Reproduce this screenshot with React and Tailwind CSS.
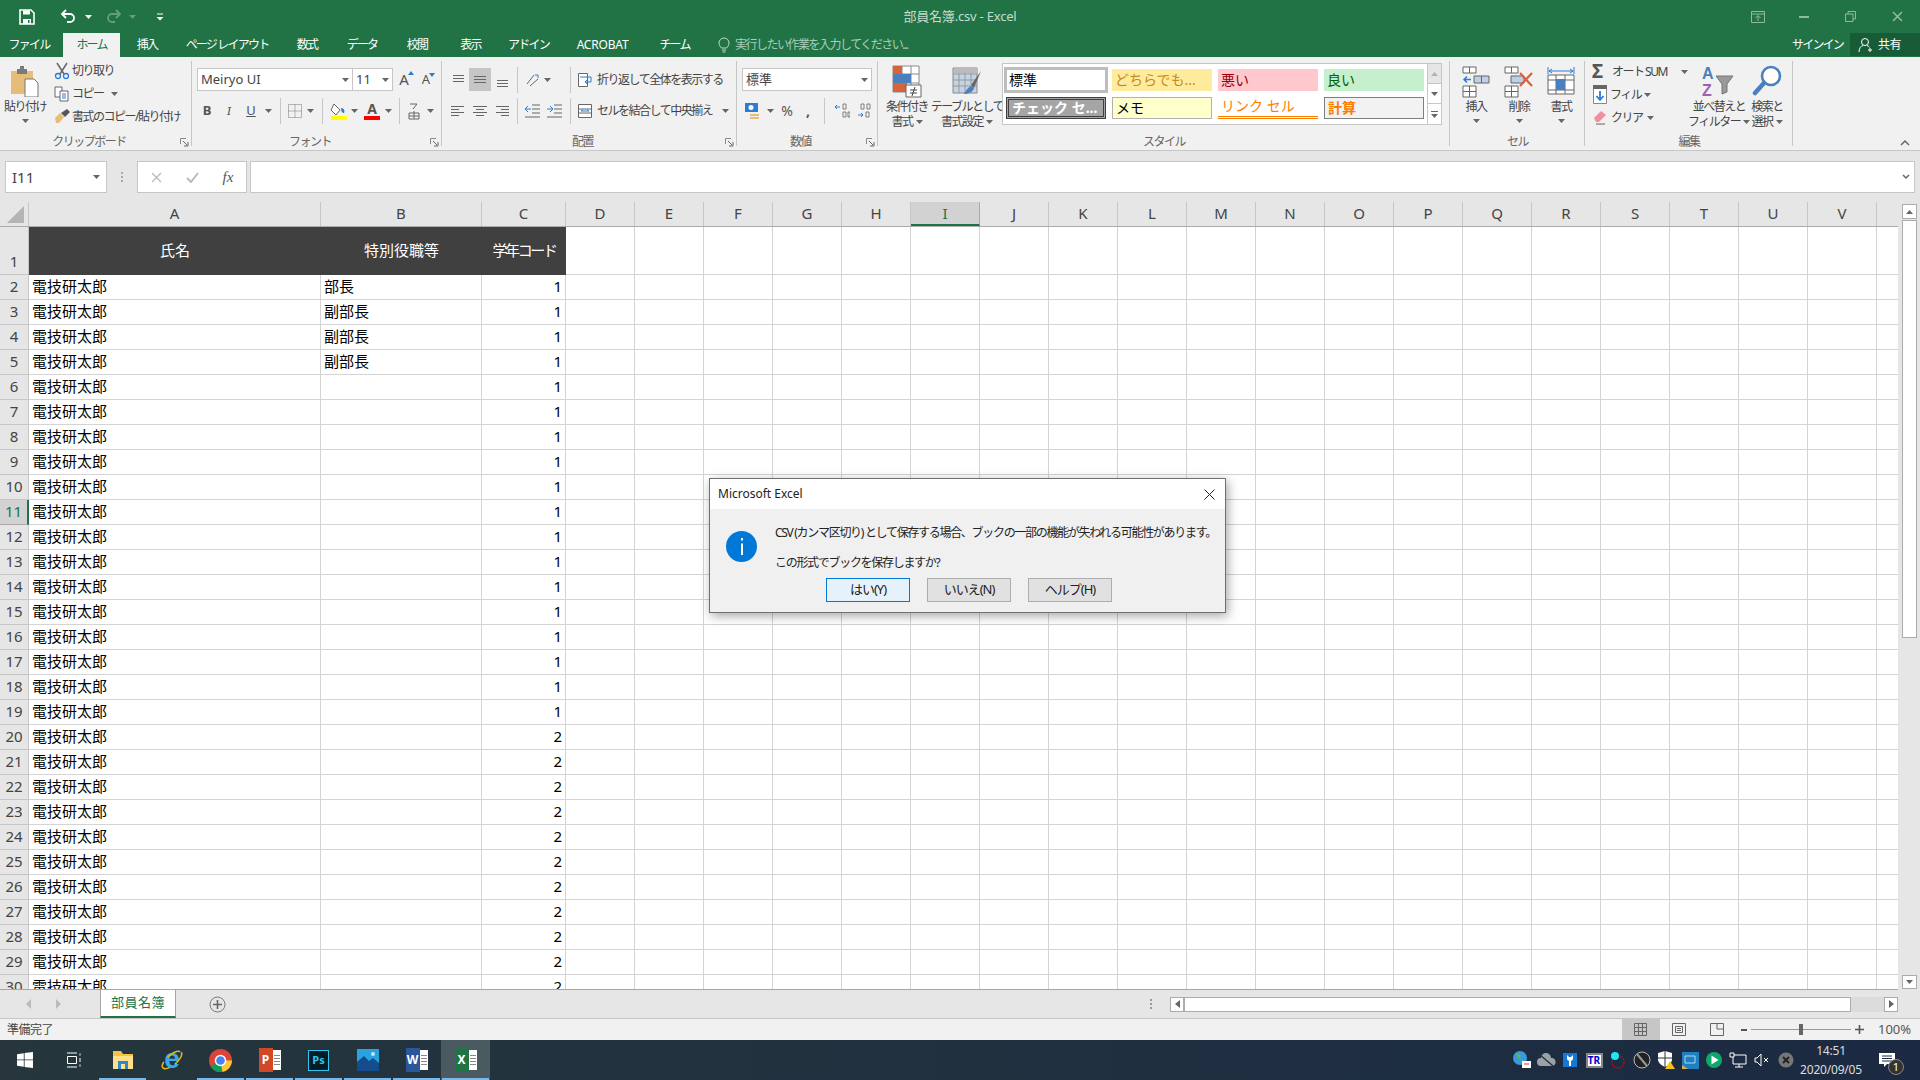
import React from 'react';

const COLS = ['D','E','F','G','H','I','J','K','L','M','N','O','P','Q','R','S','T','U','V','W'];

function Caret({ color = '#666' }) {
  return (
    <svg width="7" height="4" viewBox="0 0 7 4" className="flex-none">
      <path d="M0 0h7L3.5 4z" fill={color} />
    </svg>
  );
}

function Slot({ w, children, className = '' }) {
  return <div style={{ width: w }} className={`flex-none flex items-center justify-center ${className}`}>{children}</div>;
}

function Sep({ w }) {
  return (
    <Slot w={w} className="h-full">
      <div className="w-px h-[26px] bg-[#c6c6c6]" />
    </Slot>
  );
}

function Group({ w, label, launcher, children }) {
  return (
    <div style={{ width: w }} className="flex-none flex flex-col relative">
      <div className="absolute right-0 top-[4px] bottom-[4px] w-px bg-[#c6c6c6]" />
      <div className="h-[68px] mt-[8px] flex-none">{children}</div>
      <div className={`flex items-center justify-center h-[14px] mt-[2px] text-[#666] relative ${launcher ? 'pr-[14px]' : ''}`}>
        <span>{label}</span>
        {launcher && (
          <svg width="9" height="9" viewBox="0 0 9 9" className="absolute right-[3px] top-[3px]">
            <path d="M0.5 6V0.5H6" fill="none" stroke="#888" />
            <path d="M3 3l4 4M8 4v4H4" fill="none" stroke="#666" />
          </svg>
        )}
      </div>
    </div>
  );
}

function Lines({ x = 0, rows, stroke = '#666' }) {
  return rows.map((r, i) => <path key={i} d={`M${r[0] + x} ${r[2]}H${r[1] + x}`} stroke={stroke} fill="none" />);
}

function AlignIcon({ rows }) {
  return <svg width="16" height="16" viewBox="0 0 16 16"><Lines rows={rows} /></svg>;
}

function LargeBtn({ w, icon, l1, l2, caretInline }) {
  return (
    <Slot w={w} className="flex-col !justify-start">
      <div className="h-[33px] flex items-center justify-center">{icon}</div>
      <div className="leading-[15px] text-center text-[#444] mt-[1px] whitespace-nowrap">{l1}</div>
      {l2 ? (
        <div className="leading-[15px] text-center text-[#444] flex items-center gap-[3px] whitespace-nowrap">{l2}{caretInline && <Caret />}</div>
      ) : (
        <div className="h-[14px] flex items-center"><Caret /></div>
      )}
    </Slot>
  );
}

function QuickBar() {
  return (
    <div className="h-[33px] flex-none grid grid-cols-3 items-center text-white">
      <div className="flex items-center">
        <Slot w={53}>
          <svg width="16" height="16" viewBox="0 0 16 16">
            <path d="M1 1h11l3 3v11H1z" fill="none" stroke="#fff" strokeWidth="1.6" />
            <path d="M4 1.5h7v4H4zM4 10h8v5H4z" fill="#fff" />
            <path d="M9 11h1.5v3H9z" fill="#217346" />
          </svg>
        </Slot>
        <Slot w={30}>
          <svg width="16" height="16" viewBox="0 0 16 16">
            <path d="M3 5h7a4 4 0 0 1 0 8H7" fill="none" stroke="#fff" strokeWidth="1.8" />
            <path d="M6 1L2 5l4 4" fill="none" stroke="#fff" strokeWidth="1.8" />
          </svg>
        </Slot>
        <Slot w={10}><Caret color="#fff" /></Slot>
        <Slot w={7} />
        <Slot w={28}>
          <svg width="16" height="16" viewBox="0 0 16 16" className="opacity-30">
            <path d="M13 5H6a4 4 0 0 0 0 8h3" fill="none" stroke="#fff" strokeWidth="1.8" />
            <path d="M10 1l4 4-4 4" fill="none" stroke="#fff" strokeWidth="1.8" />
          </svg>
        </Slot>
        <Slot w={8} className="opacity-30"><Caret color="#fff" /></Slot>
        <Slot w={14} />
        <Slot w={20}>
          <svg width="8" height="8" viewBox="0 0 8 8"><path d="M1 1h6" stroke="#fff" /><path d="M0.5 4h7L4 7.5z" fill="#fff" /></svg>
        </Slot>
      </div>
      <div className="text-center text-[13px] text-[#c3dccd] tracking-[-0.2px]">部員名簿.csv - Excel</div>
      <div className="flex justify-end items-center opacity-50">
        <Slot w={46}>
          <svg width="14" height="12" viewBox="0 0 14 12"><path d="M0.5 0.5h13v11H0.5zM0.5 3h13" fill="none" stroke="#fff" /><path d="M7 10V5M4.5 7L7 4.5 9.5 7" fill="none" stroke="#fff" /></svg>
        </Slot>
        <Slot w={46}><div className="w-[10px] h-[2px] bg-white" /></Slot>
        <Slot w={47}>
          <svg width="11" height="11" viewBox="0 0 11 11"><path d="M0.5 3h7.5v7.5H0.5zM3 3V0.5h7.5V8H8" fill="none" stroke="#fff" /></svg>
        </Slot>
        <Slot w={46}>
          <svg width="11" height="11" viewBox="0 0 11 11"><path d="M1 1l9 9M10 1l-9 9" stroke="#fff" strokeWidth="1.6" /></svg>
        </Slot>
      </div>
    </div>
  );
}

function TabBar() {
  const tabs = [['ファイル', 58], ['ホーム', 62, true], ['挿入', 54], ['ページ レイアウト', 106], ['数式', 54], ['データ', 56], ['校閲', 54], ['表示', 53], ['アドイン', 63], ['ACROBAT', 85], ['チーム', 59]];
  return (
    <div className="h-[24px] flex-none flex items-stretch text-white text-[12px] tracking-[-1.8px]">
      {tabs.map(([t, w, active]) => (
        <Slot key={t} w={w} className={active ? 'bg-[#f1f1f1] text-[#217346] ml-[5px] !w-[57px] mr-0' : ''}>
          <span className={t === 'ACROBAT' ? 'tracking-[-0.2px]' : ''}>{t}</span>
        </Slot>
      ))}
      <div className="flex items-center ml-[14px] text-[#a9cdb8] gap-[5px] tracking-[-1.5px]">
        <svg width="12" height="16" viewBox="0 0 12 16"><path d="M3.5 11C2 9.5 1 8 1 6a5 5 0 0 1 10 0c0 2-1 3.500-2.500 5zM4 13h4M4.500 15h3" fill="none" stroke="#c3dccd" /></svg>
        <span>実行したい作業を入力してください...</span>
      </div>
      <div className="flex-1" />
      <div className="flex items-center w-[55px] justify-center mr-[5px]">サインイン</div>
      <div className="w-[70px] h-[23px] bg-[#185c37] flex items-center gap-[4px] pl-[8px] tracking-[-0.5px]">
        <svg width="16" height="16" viewBox="0 0 16 16"><circle cx="7" cy="5" r="3.500" fill="none" stroke="#fff" /><path d="M1 15c0-4 2-6 4-6.500M9 8.500c1 .3 2 1 2.500 2M12 11v4M10 13h4" fill="none" stroke="#fff" /></svg>
        <span>共有</span>
      </div>
    </div>
  );
}

function ClipboardGroup() {
  return (
    <div className="flex">
      <LargeBtn
        w={50}
        icon={
          <svg width="30" height="31" viewBox="0 0 30 31">
            <path d="M1 5h22v23H1z" fill="#e6bd78" />
            <path d="M7 3h10v5H7z" fill="#7a7a7a" /><path d="M10 0h4v4h-4z" fill="#7a7a7a" />
            <path d="M15 13h9l4 4v14H15z" fill="#fff" stroke="#777" />
          </svg>
        }
        l1="貼り付け"
      />
      <div className="flex flex-col h-[68px] mt-[-5px]">
        <div className="h-[23px] flex items-center gap-[2px] pl-[4px]">
          <svg width="16" height="18" viewBox="0 0 16 18"><path d="M3 1l7 11M13 1L6 12" stroke="#666" strokeWidth="1.5" /><circle cx="4" cy="14" r="2.500" fill="none" stroke="#2b7cd3" strokeWidth="1.3" /><circle cx="12" cy="14" r="2.500" fill="none" stroke="#2b7cd3" strokeWidth="1.3" /></svg>
          <span className="text-[#444]">切り取り</span>
        </div>
        <div className="h-[23px] flex items-center gap-[3px] pl-[4px]">
          <svg width="15" height="16" viewBox="0 0 15 16"><path d="M1 1h7v10H1z" fill="#fff" stroke="#666" /><path d="M6 5h8v10H6z" fill="#fff" stroke="#666" /><path d="M8 8h4M8 10h4M8 12h4" stroke="#2b7cd3" /></svg>
          <span className="text-[#444] w-[36px]">コピー</span>
          <Caret />
        </div>
        <div className="h-[23px] flex items-center gap-[2px] pl-[4px]">
          <svg width="16" height="15" viewBox="0 0 16 15"><path d="M1 9l5-5 4 4-5 6H2z" fill="#e6bd78" /><path d="M7 4l6-4 3 3-5 5z" fill="#555" /></svg>
          <span className="text-[#444]">書式のコピー/貼り付け</span>
        </div>
      </div>
    </div>
  );
}

function FontGroup() {
  return (
    <div className="flex flex-col">
      <div className="flex items-center h-[23px] mt-[3px] pl-[5px]">
        <div className="w-[156px] h-[23px] bg-white border border-[#c6c6c6] flex items-center justify-between px-[3px] tracking-normal text-[#444]">
          <span className="text-[13px]">Meiryo UI</span><Caret />
        </div>
        <div className="w-[40px] h-[23px] bg-white border border-[#c6c6c6] border-l-0 flex items-center justify-between px-[3px] tracking-normal text-[#444]">
          <span className="text-[13px]">11</span><Caret />
        </div>
        <Slot w={22}><span className="text-[15px] text-[#555] tracking-normal relative">A<i className="absolute top-[3px] right-[-5px] w-0 h-0 border-x-[3px] border-x-transparent border-b-[4px] border-b-[#2b7cd3]" /></span></Slot>
        <Slot w={22}><span className="text-[13px] text-[#555] tracking-normal relative">A<i className="absolute top-[3px] right-[-5px] w-0 h-0 border-x-[3px] border-x-transparent border-t-[4px] border-t-[#2b7cd3]" /></span></Slot>
      </div>
      <div className="flex items-center h-[23px] mt-[8px] pl-[4px] tracking-normal text-[#555]">
        <Slot w={22}><b className="text-[13px]">B</b></Slot>
        <Slot w={22}><i className="text-[13px] font-serif">I</i></Slot>
        <Slot w={22}><u className="text-[13px]">U</u></Slot>
        <Slot w={12}><Caret /></Slot>
        <Sep w={12} />
        <Slot w={18}>
          <svg width="14" height="14" viewBox="0 0 14 14"><path d="M.5.500h13v13H.500zM7 .500v13M.500 7h13" fill="none" stroke="#777" strokeDasharray="1 1" /></svg>
        </Slot>
        <Slot w={12}><Caret /></Slot>
        <Sep w={12} />
        <Slot w={20}>
          <svg width="17" height="18" viewBox="0 0 17 18"><path d="M4 2l6 6-4 5-5-5z" fill="#fff" stroke="#666" /><path d="M11 6c3 0 4 3 3 5-2 0-3-2-3-5z" fill="#2b7cd3" /><path d="M1 14h16v4H1z" fill="#ff0" /></svg>
        </Slot>
        <Slot w={12}><Caret /></Slot>
        <Slot w={24}>
          <div className="flex flex-col items-center w-[16px]"><span className="text-[14px] leading-[14px] font-bold text-[#555]">A</span><div className="w-full h-[4px] bg-[#f00]" /></div>
        </Slot>
        <Slot w={8}><Caret /></Slot>
        <Sep w={14} />
        <Slot w={16}>
          <svg width="12" height="18" viewBox="0 0 12 18"><path d="M2 2h7L5 7M1 11h10v6H1zM6 9v8M1 14h10" fill="none" stroke="#666" /></svg>
        </Slot>
        <Slot w={16}><Caret /></Slot>
      </div>
    </div>
  );
}

function AlignGroup() {
  const t = [[3, 14, 3.5], [3, 14, 6.5], [3, 14, 9.5]];
  const m = [[2, 14, 4.5], [2, 14, 7.5], [2, 14, 10.5]];
  const b = [[3, 14, 8.5], [3, 14, 11.5], [3, 14, 14.5]];
  const L = [[1, 14, 3.5], [1, 9, 6.5], [1, 14, 9.5], [1, 9, 12.5]];
  const C = [[1, 15, 3.5], [4, 12, 6.5], [1, 15, 9.5], [4, 12, 12.5]];
  const R = [[2, 15, 3.5], [7, 15, 6.5], [2, 15, 9.5], [7, 15, 12.5]];
  return (
    <div className="flex flex-col">
      <div className="flex items-center h-[23px] mt-[3px] pl-[5px]">
        <Slot w={22}><AlignIcon rows={t} /></Slot>
        <Slot w={22} className="h-[23px] bg-[#c6c6c6]"><AlignIcon rows={m} /></Slot>
        <Slot w={22}><AlignIcon rows={b} /></Slot>
        <Sep w={8} />
        <Slot w={3} />
        <Slot w={16}>
          <svg width="16" height="16" viewBox="0 0 16 16"><path d="M3 12L10 3M6 14l8-7" stroke="#666" fill="none" /><path d="M11 3h3v3" stroke="#2b7cd3" fill="none" /></svg>
        </Slot>
        <Slot w={14}><Caret /></Slot>
        <Slot w={10} />
        <Sep w={12} />
        <Slot w={18}>
          <svg width="16" height="16" viewBox="0 0 16 16"><path d="M1.500 1.500h9v13h-9z" fill="#fff" stroke="#666" /><path d="M3 5h11v5H8M10 8l-2 2 2 2" fill="none" stroke="#2b7cd3" /></svg>
        </Slot>
        <span className="ml-[3px] text-[#444] whitespace-nowrap">折り返して全体を表示する</span>
      </div>
      <div className="flex items-center h-[23px] mt-[8px] pl-[5px]">
        <Slot w={22}><AlignIcon rows={L} /></Slot>
        <Slot w={22}><AlignIcon rows={C} /></Slot>
        <Slot w={22}><AlignIcon rows={R} /></Slot>
        <Sep w={8} />
        <Slot w={22}>
          <svg width="17" height="14" viewBox="0 0 17 14"><path d="M8 1h8M8 5h8M8 9h8M1 13h15" stroke="#666" /><path d="M1 5h6M4 2L1 5l3 3" stroke="#2b7cd3" fill="none" /></svg>
        </Slot>
        <Slot w={22}>
          <svg width="17" height="14" viewBox="0 0 17 14"><path d="M8 1h8M8 5h8M8 9h8M1 13h15" stroke="#666" /><path d="M1 5h6M4 2l3 3-3 3" stroke="#2b7cd3" fill="none" /></svg>
        </Slot>
        <Sep w={11} />
        <Slot w={18}>
          <svg width="16" height="16" viewBox="0 0 16 16"><path d="M1.500 1.500h13v13h-13zM1.500 6h13M1.500 10h13" fill="#fff" stroke="#666" /><path d="M4 8h8M4 8l2-1.500M12 8l-2-1.500" stroke="#2b7cd3" fill="none" /></svg>
        </Slot>
        <span className="ml-[3px] text-[#444] whitespace-nowrap w-[125px]">セルを結合して中央揃え</span>
        <Caret />
      </div>
    </div>
  );
}

function NumberGroup() {
  return (
    <div className="flex flex-col">
      <div className="h-[23px] mt-[3px] ml-[5px] w-[130px] bg-white border border-[#c6c6c6] flex items-center justify-between px-[3px] text-[#444]">
        <span className="text-[13px] tracking-normal">標準</span><Caret />
      </div>
      <div className="flex items-center h-[23px] mt-[8px] pl-[5px] tracking-normal text-[#555]">
        <Slot w={22}>
          <svg width="18" height="18" viewBox="0 0 18 18"><path d="M1 1h13v9H1z" fill="#2b7cd3" /><circle cx="7" cy="5.500" r="2.500" fill="#fff" /><path d="M6 12h9v2H6zM6 15h9v2H6z" fill="#e6bd78" /></svg>
        </Slot>
        <Slot w={12}><Caret /></Slot>
        <Slot w={22}><span className="text-[14px]">%</span></Slot>
        <Slot w={20}><b className="text-[14px]">,</b></Slot>
        <Sep w={12} />
        <Slot w={24}>
          <svg width="16" height="15" viewBox="0 0 16 15"><path d="M1 4h5M3 2L1 4l2 2" stroke="#2b7cd3" fill="none" /><path d="M9 1h3v5H9zM9 9h3v5H9zM14 9h2v5h-2z" fill="none" stroke="#666" strokeWidth=".8" /></svg>
        </Slot>
        <Slot w={22}>
          <svg width="16" height="15" viewBox="0 0 16 15"><path d="M1 12h5M4 10l2 2-2 2" stroke="#2b7cd3" fill="none" /><path d="M9 9h3v5H9zM4 1h3v5H4zM10 1h3v5h-3z" fill="none" stroke="#666" strokeWidth=".8" /></svg>
        </Slot>
      </div>
    </div>
  );
}

function StyleCell({ className, children }) {
  return <div className={`h-[22px] w-[100px] flex items-center pl-[3px] pb-[2px] text-[14px] tracking-[0px] overflow-hidden whitespace-nowrap ${className}`}>{children}</div>;
}

function StylesGroup() {
  return (
    <div className="flex">
      <LargeBtn
        w={58}
        icon={
          <svg width="30" height="33" viewBox="0 0 30 33">
            <path d="M1 1h26v26H1zM10 1v26M19 1v26M1 9h26M1 18h26" fill="#fff" stroke="#888" />
            <path d="M1 1h9v8H1zM1 18h14v9H1z" fill="#d8623a" /><path d="M1 9h18v9H1z" fill="#4a80bd" />
            <path d="M14 20h15v12H14z" fill="#fff" stroke="#666" />
            <path d="M18 25h7M18 28h7M23 22l-3 9" stroke="#444" />
          </svg>
        }
        l1="条件付き"
        l2="書式"
        caretInline
      />
      <LargeBtn
        w={62}
        icon={
          <svg width="30" height="33" viewBox="0 0 30 33">
            <path d="M1 3h24v25H1z" fill="#c4d4e8" stroke="#888" />
            <path d="M7 3v25M13 3v25M19 3v25M1 9h24M1 15h24M1 21h24" stroke="#999" fill="none" />
            <path d="M2 3h24v5H2z" fill="#bbb" />
            <path d="M29 6l-10 14 3 3z" fill="#666" /><path d="M20 21c-4 1-6 4-8 8 4 0 9-2 10-6z" fill="#4a80bd" />
          </svg>
        }
        l1="テーブルとして"
        l2="書式設定"
        caretInline
      />
      <div className="ml-[4px] mt-[-2px] w-[440px] h-[62px] bg-white border border-[#c6c6c6] flex pt-[5px] pl-[3px]">
        <div className="grid grid-cols-[100px_100px_100px_100px] gap-x-[6px] gap-y-[6px] h-[50px]">
          <StyleCell className="outline-[3px] outline-[#bdbdbd] -outline-offset-1 text-black">標準</StyleCell>
          <StyleCell className="bg-[#ffeb9c] text-[#c58a1e]">どちらでも...</StyleCell>
          <StyleCell className="bg-[#ffc7ce] text-[#9c0006]">悪い</StyleCell>
          <StyleCell className="bg-[#c6efce] text-[#006100]">良い</StyleCell>
          <StyleCell className="bg-[#a5a5a5] text-white font-bold border-[3px] border-double border-[#3f3f3f]">チェック セ...</StyleCell>
          <StyleCell className="bg-[#ffffcc] border border-[#b2b2b2] text-black">メモ</StyleCell>
          <StyleCell className="text-[#fa7d00] border-b-[3px] border-double border-[#fa7d00]">リンク セル</StyleCell>
          <StyleCell className="bg-[#f2f2f2] text-[#fa7d00] font-bold border border-[#7f7f7f]">計算</StyleCell>
        </div>
        <div className="ml-auto mt-[-5px] w-[14px] flex flex-col border-l border-[#c6c6c6] h-[60px]">
          <div className="h-[20px] bg-[#e6e6e6] flex items-center justify-center border-b border-[#c6c6c6]"><div className="rotate-180 opacity-40"><Caret /></div></div>
          <div className="h-[20px] flex items-center justify-center border-b border-[#c6c6c6]"><Caret /></div>
          <div className="h-[20px] flex flex-col items-center justify-center gap-[2px]"><div className="w-[7px] h-px bg-[#666]" /><Caret /></div>
        </div>
      </div>
    </div>
  );
}

function CellsGroup() {
  return (
    <div className="flex pl-[4px]">
      <LargeBtn
        w={44}
        icon={
          <svg width="28" height="32" viewBox="0 0 28 32">
            <path d="M1 1h13v6H1zM7.500 1v6M1 20h13v11H1zM1 25.500h13M7.500 20v11" fill="#fff" stroke="#666" />
            <path d="M12 10h15v7H12zM19.500 10v7" fill="#bcd0e8" stroke="#666" />
            <path d="M9 13.500H2M5 10.500l-3 3 3 3" stroke="#2b7cd3" fill="none" strokeWidth="1.500" />
          </svg>
        }
        l1="挿入"
      />
      <LargeBtn
        w={42}
        icon={
          <svg width="30" height="32" viewBox="0 0 30 32">
            <path d="M1 1h13v6H1zM7.500 1v6M1 20h13v11H1zM1 25.500h13M7.500 20v11" fill="#fff" stroke="#666" />
            <path d="M7 10h13v7H7z" fill="#bcd0e8" stroke="#666" />
            <path d="M16 7l12 13M28 7L16 20" stroke="#d9623a" strokeWidth="2.200" />
          </svg>
        }
        l1="削除"
      />
      <LargeBtn
        w={42}
        icon={
          <svg width="28" height="33" viewBox="0 0 28 33">
            <path d="M2 6h24M2 6l3-2M2 6l3 2M26 6l-3-2M26 6l-3 2M1 2v7M27 2v7" stroke="#2b7cd3" fill="none" />
            <path d="M1 10h26v19H1zM9 10v19M18 10v19M1 15h26M1 25h26" fill="#fff" stroke="#666" />
            <path d="M9 14h9v11H9z" fill="#4a80bd" />
          </svg>
        }
        l1="書式"
      />
    </div>
  );
}

function EditGroup() {
  return (
    <div className="flex">
      <div className="flex flex-col w-[108px] flex-none text-[#444] mt-[-5px]">
        <div className="h-[23px] flex items-center pl-[7px] gap-[3px]">
          <span className="text-[19px] font-bold text-[#555] w-[17px] leading-[19px] tracking-normal">Σ</span>
          <span className="whitespace-nowrap">オート SUM</span><span className="w-[8px]" /><Caret />
        </div>
        <div className="h-[23px] flex items-center pl-[8px] gap-[3px]">
          <svg width="14" height="19" viewBox="0 0 14 19"><path d="M.5 .500h13v18H.500z" fill="#fff" stroke="#888" /><path d="M0 0h14v4H0z" fill="#666" /><path d="M7 6v9M3.500 11L7 15l3.500-4" stroke="#2b7cd3" strokeWidth="1.800" fill="none" /></svg>
          <span>フィル</span><Caret />
        </div>
        <div className="h-[23px] flex items-center pl-[8px] gap-[4px]">
          <svg width="14" height="15" viewBox="0 0 14 15"><path d="M1 8l7-7 5 4-7 7H3z" fill="#ef8fa0" /><path d="M3 14h9" stroke="#666" /></svg>
          <span>クリア</span><Caret />
        </div>
      </div>
      <LargeBtn
        w={52}
        icon={
          <svg width="36" height="33" viewBox="0 0 36 33">
            <text x="1" y="14" fontSize="16" fontWeight="700" fill="#4a80bd" fontFamily="Liberation Sans">A</text>
            <text x="1" y="31" fontSize="16" fontWeight="700" fill="#9a62b3" fontFamily="Liberation Sans">Z</text>
            <path d="M15 11h17l-6 8v8l-5 2V19z" fill="#999" stroke="#777" />
          </svg>
        }
        l1="並べ替えと"
        l2="フィルター"
        caretInline
      />
      <LargeBtn
        w={44}
        icon={
          <svg width="30" height="33" viewBox="0 0 30 33">
            <circle cx="19" cy="11" r="9" fill="#fff" stroke="#4a80bd" strokeWidth="2.600" />
            <path d="M12 18L3 28" stroke="#4a80bd" strokeWidth="4.500" strokeLinecap="round" />
          </svg>
        }
        l1="検索と"
        l2="選択"
        caretInline
      />
    </div>
  );
}

function Ribbon() {
  return (
    <div className="h-[94px] flex-none flex bg-[#f1f1f1] border-b border-[#c6c6c6] text-[12px] tracking-[-1.500px] relative">
      <Group w={192} label="クリップボード" launcher><ClipboardGroup /></Group>
      <Group w={250} label="フォント" launcher><FontGroup /></Group>
      <Group w={295} label="配置" launcher><AlignGroup /></Group>
      <Group w={141} label="数値" launcher><NumberGroup /></Group>
      <Group w={572} label="スタイル"><StylesGroup /></Group>
      <Group w={135} label="セル"><CellsGroup /></Group>
      <Group w={208} label="編集"><EditGroup /></Group>
      <div className="flex-1 flex items-end justify-end pr-[10px] pb-[4px]">
        <svg width="10" height="7" viewBox="0 0 10 7"><path d="M1 6l4-4 4 4" stroke="#666" strokeWidth="1.500" fill="none" /></svg>
      </div>
    </div>
  );
}

function FormulaBar() {
  return (
    <div className="h-[51px] flex-none bg-[#e6e6e6] flex items-start pt-[10px] pl-[5px] pr-[5px]">
      <div className="w-[102px] h-[32px] bg-white border border-[#c6c6c6] flex items-center justify-between pl-[6px] pr-[6px] text-[15px] text-[#444]">
        <span>I11</span><Caret />
      </div>
      <Slot w={30} className="h-[32px]">
        <div className="flex flex-col gap-[2px]">
          <i className="w-[2px] h-[2px] bg-[#aaa]" /><i className="w-[2px] h-[2px] bg-[#aaa]" /><i className="w-[2px] h-[2px] bg-[#aaa]" />
        </div>
      </Slot>
      <div className="w-[110px] h-[32px] bg-white border border-[#c6c6c6] flex items-center">
        <Slot w={37}>
          <svg width="11" height="11" viewBox="0 0 11 11"><path d="M1 1l9 9M10 1l-9 9" stroke="#bbb" strokeWidth="1.400" /></svg>
        </Slot>
        <Slot w={35}>
          <svg width="13" height="11" viewBox="0 0 13 11"><path d="M1 6l4 4 7-9" stroke="#bbb" strokeWidth="2" fill="none" /></svg>
        </Slot>
        <Slot w={36}><i className="font-['Liberation_Serif',serif] text-[15px] text-[#555]">fx</i></Slot>
      </div>
      <div className="flex-1 ml-[3px] h-[32px] bg-white border border-[#c6c6c6] flex items-center justify-end pr-[4px]">
        <svg width="8" height="6" viewBox="0 0 8 6"><path d="M1 1l3 3 3-3" stroke="#666" strokeWidth="1.500" fill="none" /></svg>
      </div>
    </div>
  );
}

function Sheet() {
  const rows = [];
  for (let r = 2; r <= 30; r++) rows.push(r);
  const roleOf = (r) => (r === 2 ? '部長' : r <= 5 ? '副部長' : '');
  return (
    <div className="h-[788px] flex-none flex bg-[#e6e6e6]">
      <div className="w-[1898px] flex-none overflow-hidden bg-white border-b border-[#a6a6a6]">
        {/* column heads */}
        <div className="flex h-[25px] bg-[#e6e6e6] border-b border-[#ababab] text-[15px] text-[#444] leading-[22px]">
          <div className="w-[29px] flex-none border-r border-[#c6c6c6] flex items-end justify-end pr-[4px] pb-[3px]">
            <svg width="17" height="17" viewBox="0 0 17 17"><path d="M17 0v17H0z" fill="#b4b4b4" /></svg>
          </div>
          <div className="w-[292px] flex-none text-center border-r border-[#c6c6c6]">A</div>
          <div className="w-[161px] flex-none text-center border-r border-[#c6c6c6]">B</div>
          <div className="w-[84px] flex-none text-center border-r border-[#c6c6c6]">C</div>
          {COLS.map((c) => (
            <div key={c} className={`w-[69px] flex-none text-center border-r ${c === 'I' ? 'bg-[#d2d2d2] text-[#217346] border-b-2 border-b-[#217346] border-r-[#ababab]' : 'border-[#c6c6c6]'}`}>{c === 'W' ? '' : c}</div>
          ))}
        </div>
        {/* row 1 */}
        <div className="flex h-[48px] text-[15px]">
          <div className="w-[29px] flex-none bg-[#e6e6e6] border-r border-b border-[#c6c6c6] text-[#444] flex items-end justify-center pb-[3px] leading-[20px]">1</div>
          <div className="w-[537px] flex-none flex bg-[#404040] text-white items-center text-center pb-[2px]">
            <div className="w-[292px]">氏名</div>
            <div className="w-[161px]">特別役職等</div>
            <div className="w-[84px] tracking-[-2.4px]">学年コード</div>
          </div>
          {COLS.map((c) => <div key={c} className="w-[69px] flex-none border-r border-b border-[#d4d4d4]" />)}
        </div>
        {rows.map((r) => (
          <div key={r} className="flex h-[25px] text-[15px] leading-[22px]">
            <div className={`w-[29px] flex-none border-b text-center ${r === 11 ? 'bg-[#d2d2d2] text-[#217346] border-r-2 border-r-[#217346] border-b-[#ababab]' : 'bg-[#e6e6e6] text-[#444] border-r border-[#c6c6c6]'}`}>{r}</div>
            <div className="w-[292px] flex-none border-r border-b border-[#d4d4d4] pl-[3px] text-black">電技研太郎</div>
            <div className="w-[161px] flex-none border-r border-b border-[#d4d4d4] pl-[3px] text-black">{roleOf(r)}</div>
            <div className="w-[84px] flex-none border-r border-b border-[#d4d4d4] pr-[3px] text-right text-black">{r <= 19 ? 1 : 2}</div>
            {COLS.map((c) => <div key={c} className="w-[69px] flex-none border-r border-b border-[#d4d4d4]" />)}
          </div>
        ))}
      </div>
      <div className="flex-1 flex flex-col items-center pt-[2px] pb-[1px]">
        <div className="w-[15px] h-[15px] bg-white border border-[#ababab] flex items-center justify-center"><div className="rotate-180"><Caret /></div></div>
        <div className="w-[15px] h-[418px] mt-[1px] bg-white border border-[#ababab]" />
        <div className="flex-1" />
        <div className="w-[15px] h-[14px] bg-white border border-[#ababab] flex items-center justify-center"><Caret /></div>
      </div>
    </div>
  );
}

function SheetTabs() {
  return (
    <div className="h-[29px] flex-none bg-[#e6e6e6] flex items-center border-b border-[#c6c6c6]">
      <Slot w={87} className="gap-[23px]">
        <svg width="6" height="10" viewBox="0 0 6 10"><path d="M5 0v10L0 5z" fill="#bbb" /></svg>
        <svg width="6" height="10" viewBox="0 0 6 10"><path d="M1 0v10l5-5z" fill="#bbb" /></svg>
      </Slot>
      <div className="ml-[13px] w-[76px] h-[28px] self-start bg-white border-x border-[#a6a6a6] border-b-2 border-b-[#217346] text-[#217346] text-[13px] flex items-center justify-center tracking-[0.5px]">部員名簿</div>
      <Slot w={83}>
        <svg width="17" height="17" viewBox="0 0 17 17"><circle cx="8.500" cy="8.500" r="7.500" fill="none" stroke="#777" /><path d="M8.500 4v9M4 8.500h9" stroke="#666" strokeWidth="1.600" /></svg>
      </Slot>
      <div className="w-[911px] flex-none flex justify-end pr-[18px]">
        <div className="flex flex-col gap-[2px]"><i className="w-[2px] h-[2px] bg-[#999]" /><i className="w-[2px] h-[2px] bg-[#999]" /><i className="w-[2px] h-[2px] bg-[#999]" /></div>
      </div>
      <div className="w-[14px] h-[15px] bg-white border border-[#ababab] flex items-center justify-center">
        <svg width="5" height="8" viewBox="0 0 5 8"><path d="M5 0v8L0 4z" fill="#666" /></svg>
      </div>
      <div className="w-[667px] h-[15px] bg-white border border-[#ababab]" />
      <div className="w-[33px] h-[15px] bg-[#dcdcdc]" />
      <div className="w-[14px] h-[15px] bg-white border border-[#ababab] flex items-center justify-center">
        <svg width="5" height="8" viewBox="0 0 5 8"><path d="M0 0v8l5-4z" fill="#666" /></svg>
      </div>
    </div>
  );
}

function StatusBar() {
  return (
    <div className="h-[21px] flex-none bg-[#f1f1f1] flex items-center text-[12px] text-[#444] tracking-[-0.500px]">
      <span className="ml-[7px] w-[1615px]">準備完了</span>
      <Slot w={38} className="h-[21px] bg-[#c6c6c6]">
        <svg width="14" height="14" viewBox="0 0 14 14"><path d="M.5 .500h12v12H.500zM4.500 .500v12M8.500 .500v12M.500 4.500h12M.500 8.500h12" fill="none" stroke="#666" /></svg>
      </Slot>
      <Slot w={38}>
        <svg width="14" height="13" viewBox="0 0 14 13"><path d="M.5 .500h13v12H.500z" fill="none" stroke="#666" /><path d="M3.500 3.500h7v6h-7zM5 5.500h4M5 7.500h4" fill="none" stroke="#666" /></svg>
      </Slot>
      <Slot w={38}>
        <svg width="14" height="13" viewBox="0 0 14 13"><path d="M.5 12.500V.500h13v12zM7 .500V6h6.500" fill="none" stroke="#666" /></svg>
      </Slot>
      <Slot w={10} className="ml-[3px]"><div className="w-[6px] h-[2px] bg-[#555]" /></Slot>
      <div className="w-[100px] ml-[2px] h-px bg-[#999] relative">
        <div className="absolute left-[48px] top-[-5px] w-[4px] h-[11px] bg-[#666]" />
      </div>
      <Slot w={16}>
        <svg width="9" height="9" viewBox="0 0 9 9"><path d="M4.500 0v9M0 4.500h9" stroke="#555" strokeWidth="1.600" /></svg>
      </Slot>
      <span className="ml-[11px] w-[42px] text-[13px] tracking-normal text-[#555]">100%</span>
    </div>
  );
}

function AppIcon({ kind }) {
  if (kind === 'win') return (
    <svg width="16" height="16" viewBox="0 0 16 16"><path d="M0 2.200l6.800-1v6.300H0zM7.600 1l8.400-1v7.500H7.600zM0 8.300h6.800v6.500L0 13.800zM7.600 8.300H16V16l-8.400-1.100z" fill="#fff" /></svg>
  );
  if (kind === 'tv') return (
    <svg width="16" height="16" viewBox="0 0 16 16"><path d="M1 1h10M1 15h10M1.500 4.500h9v7h-9zM14 1.500v2M14 6v4M14 12.500v2" stroke="#fff" fill="none" /></svg>
  );
  if (kind === 'folder') return (
    <svg width="22" height="22" viewBox="0 0 22 22"><path d="M1 2h8l2 3h10v15H1z" fill="#f5c342" /><path d="M1 7h20v13H1z" fill="#ffe08a" /><path d="M6 12h10v8H6z" fill="#2f86c9" /><path d="M9 15h4v5H9z" fill="#ffe08a" /></svg>
  );
  if (kind === 'ie') return (
    <svg width="24" height="24" viewBox="0 0 24 24"><text x="12" y="20" textAnchor="middle" fontSize="28" fontWeight="700" fill="#39a9ec" fontFamily="Liberation Sans">e</text><ellipse cx="12" cy="12" rx="12" ry="5" transform="rotate(-40 12 12)" fill="none" stroke="#e8b90e" strokeWidth="1.500" strokeDasharray="14 6" /></svg>
  );
  if (kind === 'chrome') return (
    <svg width="23" height="23" viewBox="0 0 24 24"><circle cx="12" cy="12" r="12" fill="#db4437" /><path d="M12 12L1.600 18A12 12 0 0 0 14 23.800z" fill="#0f9d58" /><path d="M12 12h12A12 12 0 0 1 14 23.800z" fill="#fcc934" /><circle cx="12" cy="12" r="6" fill="#fff" /><circle cx="12" cy="12" r="4.500" fill="#4285f4" /></svg>
  );
  return null;
}

function Letter({ bg, letter, fg = '#fff', className = '' }) {
  return (
    <div className={`flex items-stretch h-[24px] w-[22px] ${className}`}>
      <div style={{ background: bg, color: fg }} className="w-[14px] flex items-center justify-center text-[12px] font-bold">{letter}</div>
      <div className="w-[8px] bg-white my-[2px] flex flex-col justify-center gap-[2px] px-[1px]">
        <i className="h-px bg-[#888]" /><i className="h-px bg-[#888]" /><i className="h-px bg-[#888]" /><i className="h-px bg-[#888]" />
      </div>
    </div>
  );
}

function TaskBar() {
  const apps = [
    { el: <AppIcon kind="win" /> },
    { el: <AppIcon kind="tv" /> },
    { el: <AppIcon kind="folder" />, on: true },
    { el: <AppIcon kind="ie" /> },
    { el: <AppIcon kind="chrome" />, on: true },
    { el: <Letter bg="#d24726" letter="P" />, on: true },
    { el: <div className="w-[21px] h-[21px] bg-[#001d26] border border-[#31c5f0] text-[#31c5f0] text-[11px] font-bold flex items-center justify-center">Ps</div>, on: true },
    { el: <svg width="22" height="22" viewBox="0 0 22 22"><path d="M0 0h22v22H0z" fill="#29a3e0" /><path d="M0 22V13l7-6 5 5 4-3 6 5v8z" fill="#144c8c" /><circle cx="16" cy="5" r="2" fill="#bfe6fb" /></svg>, on: true },
    { el: <Letter bg="#2b579a" letter="W" />, on: true },
    { el: <Letter bg="#217346" letter="X" />, on: true, active: true },
  ];
  return (
    <div className="h-[40px] flex-none flex items-stretch bg-linear-to-r from-[#26363c] to-[#1b2a42] text-white">
      {apps.map((a, i) => (
        <div key={i} className={`w-[49px] flex-none flex items-center justify-center relative ${a.active ? 'bg-[#4a5a60]' : ''}`}>
          {a.el}
          {a.on && <div className="absolute bottom-0 left-[1px] right-[1px] h-[2px] bg-[#76b9ed]" />}
        </div>
      ))}
      <div className="flex-1" />
      <div className="flex items-center">
        <Slot w={24}><svg width="20" height="20" viewBox="0 0 20 20"><circle cx="8" cy="8" r="7" fill="#3a9ad9" /><path d="M4 3l5 2-2 5zM9 10l4 2-2 3z" fill="#5cb85c" /><path d="M10 11h9v7h-9z" fill="#fff" /><path d="M12 14h5" stroke="#d33" /></svg></Slot>
        <Slot w={24}><svg width="20" height="14" viewBox="0 0 20 14"><path d="M5 13a4 4 0 0 1 0-8 5 5 0 0 1 10 0 4 4 0 0 1 1 8z" fill="#9aa2a8" /><path d="M3 1l14 12" stroke="#26363c" strokeWidth="1.500" /></svg></Slot>
        <Slot w={24}><svg width="16" height="16" viewBox="0 0 16 16"><path d="M1 1h14v14H1z" fill="#1478d4" /><path d="M5 3v4a3 3 0 0 0 2 2v5h2V9a3 3 0 0 0 2-2V3L9 5H7z" fill="#fff" /></svg></Slot>
        <Slot w={24}><div className="w-[17px] h-[15px] bg-white border-2 border-[#888] text-[#00c] text-[10px] font-bold leading-[11px] text-center">TR</div></Slot>
        <Slot w={24}><svg width="20" height="20" viewBox="0 0 20 20"><circle cx="10" cy="12" r="6" fill="none" stroke="#a11" strokeWidth="1.500" strokeDasharray="2 1" /><circle cx="7" cy="6" r="4" fill="#1fe6f0" /></svg></Slot>
        <Slot w={24}><svg width="18" height="18" viewBox="0 0 18 18"><circle cx="9" cy="9" r="8" fill="#222" stroke="#bbb" /><path d="M4 3l10 12" stroke="#999" strokeWidth="2" /></svg></Slot>
        <Slot w={24}><svg width="20" height="20" viewBox="0 0 20 20"><path d="M2 3l7-2 7 2v6c0 4-3 6-7 8-4-2-7-4-7-8z" fill="#fff" /><path d="M9 1v16M2 8h14" stroke="#26363c" /><path d="M14 11l5 8h-10z" fill="#f6c21c" /></svg></Slot>
        <Slot w={24}><svg width="17" height="17" viewBox="0 0 17 17"><path d="M0 0h17v17H0z" fill="#1f7fc0" /><path d="M3 4h10v7H3z" fill="none" stroke="#a9dcf5" /><path d="M0 13l6 4H0z" fill="#d9b04a" /></svg></Slot>
        <Slot w={24}><svg width="18" height="18" viewBox="0 0 18 18"><circle cx="9" cy="9" r="8" fill="#0fa86c" /><path d="M6.500 4.500v9l7-4.500z" fill="#fff" /></svg></Slot>
        <Slot w={24}><svg width="18" height="16" viewBox="0 0 18 16"><path d="M4 3h13v9H4zM10 12v3M6 15h8" fill="none" stroke="#fff" /><path d="M1 1h4v4H1z" fill="#1c2b40" stroke="#fff" /></svg></Slot>
        <Slot w={24}><svg width="16" height="14" viewBox="0 0 16 14"><path d="M1 5h2l4-4v12l-4-4H1z" fill="none" stroke="#fff" /><path d="M10 5l4 4M14 5l-4 4" stroke="#fff" /></svg></Slot>
        <Slot w={24}><svg width="16" height="16" viewBox="0 0 16 16"><circle cx="8" cy="8" r="7.500" fill="#777" /><path d="M5 5l6 6M11 5l-6 6" stroke="#222" strokeWidth="2" /></svg></Slot>
      </div>
      <div className="w-[66px] flex flex-col items-center justify-center text-[12px] leading-[19px] text-[#ddd] tracking-[-0.200px] whitespace-nowrap">
        <span>14:51</span>
        <span>2020/09/05</span>
      </div>
      <Slot w={46} className="relative mr-[10px]">
        <svg width="16" height="15" viewBox="0 0 16 15"><path d="M0 0h16v11H8l-3 3v-3H0z" fill="#fff" /><path d="M3 3h10M3 5.500h10M3 8h10" stroke="#1c2b40" /></svg>
        <div className="absolute left-[24px] top-[19px] w-[16px] h-[16px] rounded-full bg-[#333] border border-[#888] text-[11px] leading-[14px] text-center">1</div>
      </Slot>
    </div>
  );
}

function Dialog() {
  return (
    <div className="absolute left-[709px] top-[478px] w-[517px] h-[135px] bg-[#f0f0f0] border border-[#6f6f6f] shadow-[2px_3px_10px_rgba(0,0,0,0.35)] flex flex-col text-[12px] text-[#222]">
      <div className="h-[30px] flex-none bg-white flex items-center justify-between pl-[8px] pr-[10px]">
        <span className="tracking-[0px]">Microsoft Excel</span>
        <svg width="11" height="11" viewBox="0 0 11 11"><path d="M.5 .500l10 10M10.500 .500l-10 10" stroke="#222" /></svg>
      </div>
      <div className="flex pl-[16px] pt-[14px]">
        <div className="w-[31px] h-[31px] mt-[8px] rounded-full bg-[#0078d7] flex items-center justify-center flex-none">
          <svg width="4" height="17" viewBox="0 0 4 17"><path d="M1 0h2v2.500H1zM1 5.500h2V17H1z" fill="#fff" /></svg>
        </div>
        <div className="ml-[18px] flex flex-col tracking-[-1.300px]">
          <div className="h-[20px] leading-[20px] whitespace-nowrap">CSV (カンマ区切り) として保存する場合、ブックの一部の機能が失われる可能性があります。</div>
          <div className="h-[20px] mt-[10px] leading-[20px]">この形式でブックを保存しますか?</div>
        </div>
      </div>
      <div className="flex pl-[116px] gap-[17px] mt-[5px] text-[13px] tracking-[-1px]">
        <div className="w-[84px] h-[24px] bg-[#e5f1fb] border border-[#0078d7] flex items-center justify-center">はい(Y)</div>
        <div className="w-[84px] h-[24px] bg-[#e1e1e1] border border-[#adadad] flex items-center justify-center">いいえ(N)</div>
        <div className="w-[84px] h-[24px] bg-[#e1e1e1] border border-[#adadad] flex items-center justify-center">ヘルプ(H)</div>
      </div>
    </div>
  );
}

export default function App() {
  return (
    <div className="relative w-[1920px] h-[1080px] overflow-hidden flex flex-col bg-[#217346] font-['Noto_Sans','Noto_Sans_CJK_JP',sans-serif]">
      <QuickBar />
      <TabBar />
      <Ribbon />
      <FormulaBar />
      <Sheet />
      <SheetTabs />
      <StatusBar />
      <TaskBar />
      <Dialog />
    </div>
  );
}
